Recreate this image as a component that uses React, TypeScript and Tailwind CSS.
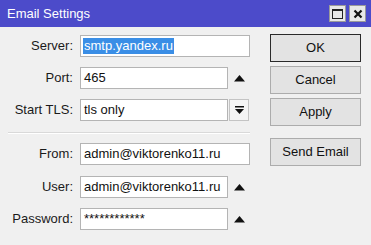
import React from "react";

function Field({
  label,
  value,
  short,
  selected,
  trailing,
}: {
  label: string;
  value: string;
  short?: boolean;
  selected?: boolean;
  trailing?: React.ReactNode;
}) {
  return (
    <div className="flex h-[22px] items-center">
      <div className="w-[73px] shrink-0 text-right text-[#1a1a1a]">{label}</div>
      <div
        className={`ml-[7px] flex h-[22px] items-center border border-[#b4b4b4] bg-white pl-[2px] ${
          short ? "w-[148px]" : "w-[170px]"
        }`}
      >
        {selected ? (
          <span className="bg-[#3a8ee6] px-px leading-[16px] text-white">{value}</span>
        ) : (
          <span className="px-px text-[#111]">{value}</span>
        )}
      </div>
      {trailing}
    </div>
  );
}

function UpArrow() {
  return (
    <div className="flex w-[22px] justify-center">
      <svg width="11" height="7" viewBox="0 0 11 7">
        <path d="M5.5 0 L11 6.5 L0 6.5 Z" fill="#111" />
      </svg>
    </div>
  );
}

function DropButton() {
  return (
    <div className="ml-[1px] flex h-[22px] w-[20px] items-center justify-center border border-[#c4c4c4] bg-[#f4f4f4]">
      <svg width="9" height="8" viewBox="0 0 9 8">
        <rect x="0" y="0" width="9" height="1.5" fill="#111" />
        <path d="M0 3 L9 3 L4.5 8 Z" fill="#111" />
      </svg>
    </div>
  );
}

function SideButton({ label, primary }: { label: string; primary?: boolean }) {
  return (
    <div
      className={`flex h-[28px] w-[91px] items-center justify-center bg-[#e3e3e3] text-[#111] ${
        primary ? "border-[1.5px] border-[#2a2a2a]" : "border border-[#acacac]"
      }`}
    >
      {label}
    </div>
  );
}

export default function App() {
  return (
    <div className="h-[245px] w-[371px] overflow-hidden bg-[#f0f0f0] font-['Liberation_Sans',Arial,sans-serif] text-[13px]">
      <div className="flex h-[27px] items-center justify-between bg-[#4c4bca] pl-[7px] pr-[5px]">
        <span className="text-white">Email Settings</span>
        <div className="flex gap-[3px]">
          <div className="flex h-[17px] w-[17px] items-center justify-center border border-[#9a9a9a] bg-[#e8e8e8]">
            <div className="h-[10px] w-[11px] border-[1.5px] border-t-[2.5px] border-[#222]" />
          </div>
          <div className="flex h-[17px] w-[17px] items-center justify-center border border-[#9a9a9a] bg-[#e8e8e8]">
            <svg width="10" height="10" viewBox="0 0 10 10">
              <path d="M1.5 1.5 L8.5 8.5 M8.5 1.5 L1.5 8.5" stroke="#111" strokeWidth="2.2" />
            </svg>
          </div>
        </div>
      </div>

      <div className="flex">
        <div className="flex w-[262px] flex-col pt-[8px]">
          <Field label="Server:" value="smtp.yandex.ru" selected />
          <div className="mt-[10px]">
            <Field label="Port:" value="465" short trailing={<UpArrow />} />
          </div>
          <div className="mt-[10px]">
            <Field label="Start TLS:" value="tls only" short trailing={<DropButton />} />
          </div>
          <div className="ml-[8px] mt-[11px] h-[2px] w-[242px] border-t border-b border-t-[#d9d9d9] border-b-white" />
          <div className="mt-[9px]">
            <Field label="From:" value="admin@viktorenko11.ru" />
          </div>
          <div className="mt-[11px]">
            <Field label="User:" value="admin@viktorenko11.ru" short trailing={<UpArrow />} />
          </div>
          <div className="mt-[10px]">
            <Field
              label="Password:"
              value="************"
              short
              trailing={<UpArrow />}
            />
          </div>
        </div>

        <div className="ml-[8px] flex flex-col pt-[7px]">
          <SideButton label="OK" primary />
          <div className="mt-[4px]">
            <SideButton label="Cancel" />
          </div>
          <div className="mt-[4px]">
            <SideButton label="Apply" />
          </div>
          <div className="mt-[12px]">
            <SideButton label="Send Email" />
          </div>
        </div>
      </div>
    </div>
  );
}
